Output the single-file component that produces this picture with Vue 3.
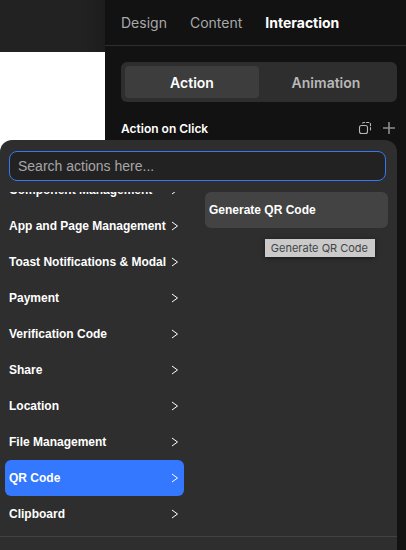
<template>
  <div class="editor">
    <div class="canvas">
      <div class="canvas-bar"></div>
      <div class="page"></div>
    </div>
    <aside class="panel">
      <nav class="tabs">
        <button v-for="t in tabs" :key="t" type="button" :class="{ active: t === tab }" @click="tab = t">{{ t }}</button>
      </nav>
      <div class="panel-body">
        <div class="segment">
          <button v-for="m in modes" :key="m" type="button" :class="{ active: m === mode }" @click="mode = m">{{ m }}</button>
        </div>
        <div class="section">
          <h3>Action on Click</h3>
          <button type="button" aria-label="Copy action">
            <svg width="14" height="14" viewBox="0 0 14 14" fill="none" stroke="#b8b8b8" stroke-width="1.1">
              <rect x="1.5" y="4.5" width="8" height="8" rx="2" />
              <path d="M4.5 2.5Q4.5 1.5 5.5 1.5H10.5Q12.5 1.5 12.5 3.5V8.5Q12.5 9.5 11.5 9.5" stroke-dasharray="3 1" />
            </svg>
          </button>
          <button type="button" aria-label="Add action">
            <svg width="14" height="14" viewBox="0 0 14 14" fill="none" stroke="#8c8c8c">
              <path d="M7 1v12M1 7h12" stroke-width="1.6" />
            </svg>
          </button>
        </div>
      </div>
    </aside>

    <div class="popover">
      <div class="search">
        <input v-model="keyword" type="text" placeholder="Search actions here..." aria-label="Search actions" />
      </div>
      <div class="columns">
        <ul ref="list" class="categories">
          <li v-for="c in categories" :key="c">
            <button type="button" :class="{ active: c === category }" @click="category = c">
              <span>{{ c }}</span>
              <svg width="8" height="10" viewBox="0 0 8 10" fill="none" stroke="currentColor">
                <path d="M1 1l5.5 4L1 9" />
              </svg>
            </button>
          </li>
        </ul>
        <div class="actions">
          <button type="button">Generate QR Code</button>
          <div class="tooltip" role="tooltip">Generate QR Code</div>
        </div>
      </div>
      <div class="footer"></div>
    </div>
  </div>
</template>

<script setup>
import { ref, onMounted } from "vue";

const tabs = ["Design", "Content", "Interaction"];
const modes = ["Action", "Animation"];
const categories = [
  "Component Management",
  "App and Page Management",
  "Toast Notifications & Modal",
  "Payment",
  "Verification Code",
  "Share",
  "Location",
  "File Management",
  "QR Code",
  "Clipboard",
];
const tab = ref("Interaction");
const mode = ref("Action");
const category = ref("QR Code");
const keyword = ref("");
const list = ref(null);

onMounted(() => {
  list.value.scrollTop = 20;
});
</script>

<style>
body { margin: 0; background: #121212; }
</style>
<style scoped>
* { box-sizing: border-box; }
button { border: 0; padding: 0; background: none; color: inherit; font: inherit; cursor: pointer; }
svg { display: block; flex: none; }
.editor { position: relative; display: flex; height: 100vh; overflow: hidden; background: #121212; color: #fff; font-family: Inter, sans-serif; }
.canvas { flex: 0 0 105px; display: flex; flex-direction: column; }
.canvas-bar { height: 52px; background: linear-gradient(to right, #222 75%, #1d1d1d); }
.page { flex: 1; background: #fff; }
.panel { flex: 1; min-width: 0; }
.tabs { display: flex; gap: 23px; height: 46px; padding: 0 16px; border-bottom: 1px solid #2e2e2e; font-size: 14px; color: #a8a8a8; }
.tabs .active { color: #fff; font-weight: 700; }
.panel-body { padding: 16px 9px 0 16px; }
.segment { display: flex; height: 40px; padding: 4px; border-radius: 6px; background: #2e2e2e; font-size: 14px; font-weight: 600; color: #b8b8b8; }
.segment button { flex: 1; border-radius: 4px; }
.segment .active { background: #3d3d3d; color: #fff; }
.section { display: flex; align-items: center; gap: 10px; height: 52px; padding-right: 1px; }
.section h3 { flex: 1; margin: 0; font-size: 12px; font-weight: 600; }

.popover { position: absolute; top: 140px; left: 0; right: 9px; bottom: 0; display: flex; flex-direction: column; border-radius: 12px 12px 0 0; background: #2e2e2e; font-family: "Liberation Sans", Arial, sans-serif; }
.search { padding: 11px 11px 11px 9px; }
.search input { display: block; width: 100%; height: 30px; padding: 0 8px; border: 1px solid #3478f6; border-radius: 8px; outline: none; background: #222; color: #fff; font-family: inherit; font-size: 14px; }
.search input::placeholder { color: #a6a6a6; opacity: 1; }
.columns { flex: 1; display: flex; min-height: 0; gap: 21px; padding: 0 9px 0 5px; font-size: 12px; font-weight: 700; }
.categories { flex: 0 0 179px; margin: 0; padding: 0 0 4px; overflow-y: auto; scrollbar-width: none; list-style: none; }
.categories button { display: flex; align-items: center; justify-content: space-between; width: 100%; height: 36px; padding: 0 5px 0 4px; border-radius: 6px; text-align: left; white-space: nowrap; }
.categories .active { background: #3478ff; }
.actions { position: relative; flex: 1; }
.actions button { display: block; width: 100%; height: 36px; padding: 0 4px; border-radius: 6px; background: #434343; text-align: left; }
.tooltip { position: absolute; top: 47px; right: 13px; padding: 0 7px 0 6px; background: #c9cac9; color: #444; font-family: Inter, sans-serif; font-size: 11px; font-weight: 400; line-height: 18px; white-space: nowrap; box-shadow: 0 1px 4px rgba(0, 0, 0, 0.5); }
.footer { flex: 0 0 14px; border-top: 1px solid #424242; }
</style>
